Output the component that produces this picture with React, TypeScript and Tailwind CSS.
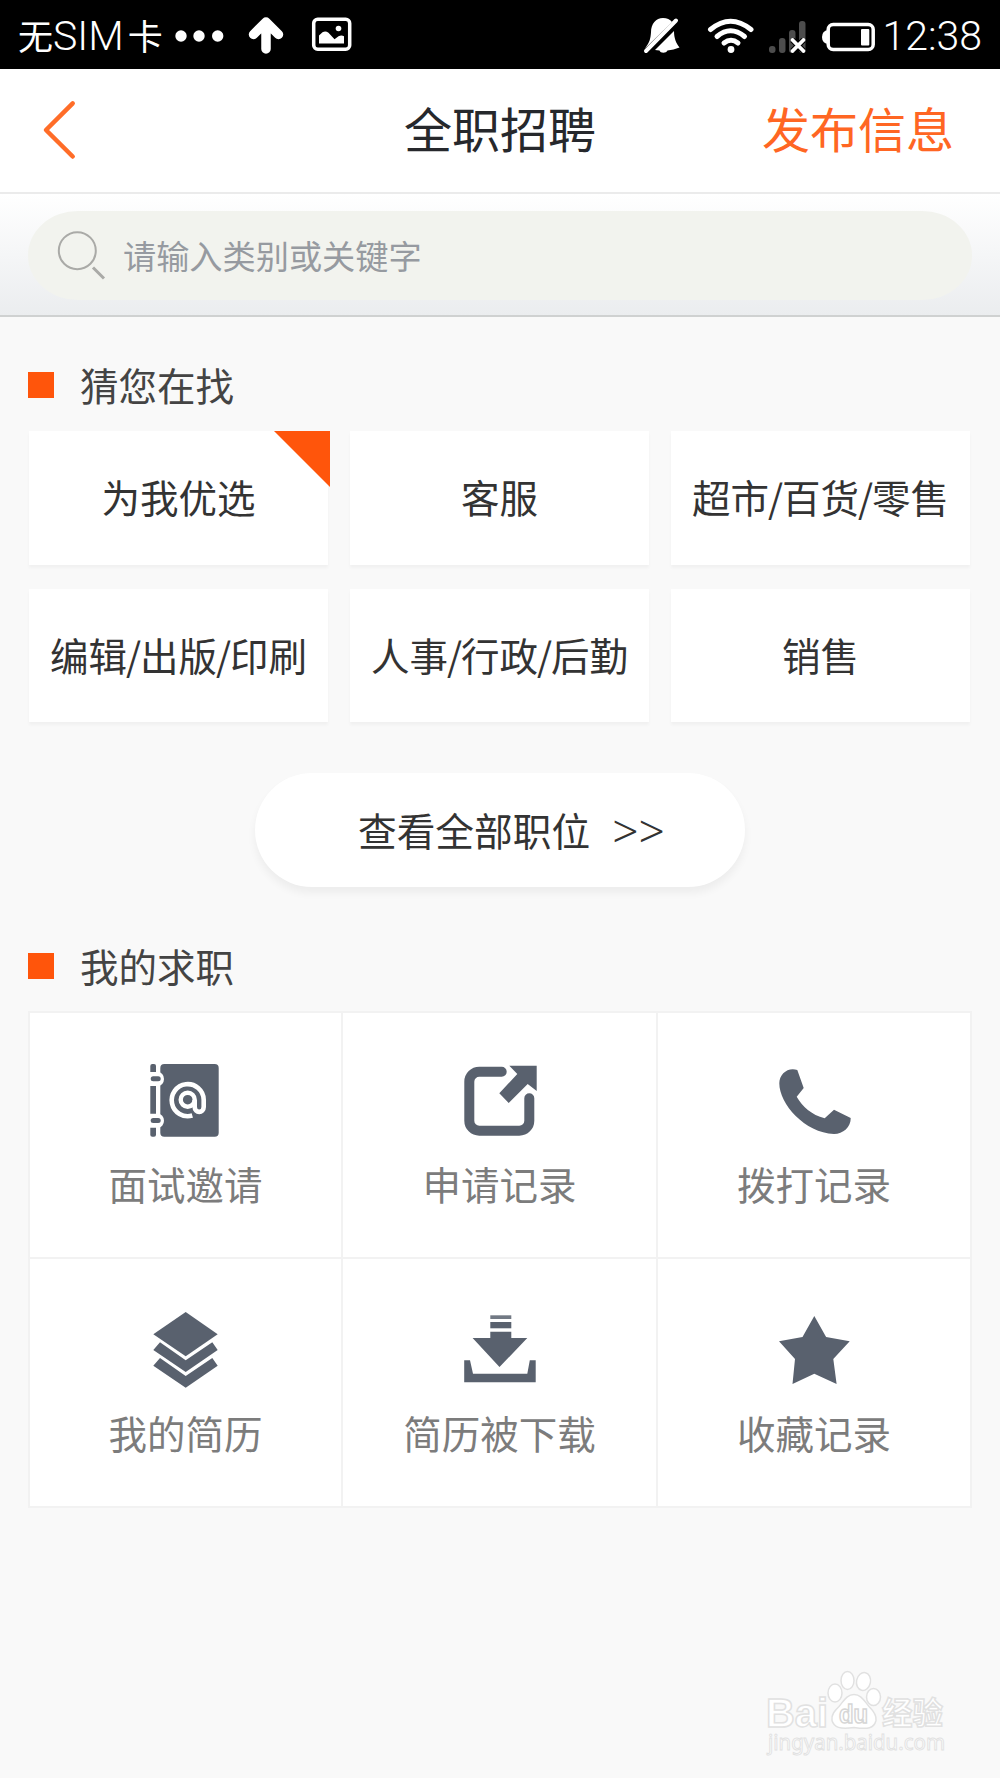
import { Fragment, type ReactNode } from 'react'

const categories = [
  { name: '为我优选', picked: true },
  { name: '客服' },
  { name: '超市/百货/零售' },
  { name: '编辑/出版/印刷' },
  { name: '人事/行政/后勤' },
  { name: '销售' },
]

const BookIcon = () => (
  <svg className="h-[76px] w-[76px]" viewBox="1 0 76 76" fill="none">
    <rect x="3.3" y="2" width="5.7" height="72.7" rx="2" fill="#59616e" />
    <rect x="13.3" y="2" width="58.4" height="72.7" rx="4" fill="#59616e" />
    <path d="M2 10h9a6 7 0 0 1 0 14H2zM2 51.7h9a6 7 0 0 1 0 14H2z" fill="#fff" />
    <rect x="3.7" y="14.3" width="10" height="5" rx="2.5" fill="#59616e" />
    <rect x="3.7" y="56" width="10" height="5" rx="2.5" fill="#59616e" />
    <circle cx="40.7" cy="37.7" r="7" stroke="#fff" strokeWidth="4.4" />
    <path
      d="M45.3 53.5A16 16 0 1 1 56.7 37.7V45c0 6.5-9 6.5-9 0v-7"
      stroke="#fff"
      strokeWidth="4.6"
    />
  </svg>
)

const ExportIcon = () => (
  <svg className="h-[76px] w-[76px]" viewBox="0 0 76 76" fill="none">
    <path
      d="M39.7 9.7H17.3a10 10 0 0 0-10 10v39a10 10 0 0 0 10 10h40a10 10 0 0 0 10-10V36.3"
      stroke="#59616e"
      strokeWidth="10"
      strokeLinecap="round"
    />
    <path d="M47.3 3.7h27.4V29l-9-7-19 19-9.4-9.7L55.3 12z" fill="#59616e" />
  </svg>
)

const PhoneIcon = () => (
  <svg className="h-[76px] w-[76px]" viewBox="-1 0 76 76" fill="#59616e">
    <path d="M20.3 8l6.4 18-7 8.7c5.5 9.8 15 18.2 28 21.6l9.3-8.6L73.7 56C74 65 66 72 57 72 28 71 2.3 42 2.3 21.3 2.3 12 11 4.8 20.3 8z" />
  </svg>
)

const LayersIcon = () => (
  <svg className="h-[76px] w-[76px]" viewBox="1 0 76 76" fill="#59616e">
    <path d="M38.7 0l32 22.3-32 22-32.4-22z" />
    <path d="M13 30.3l25.7 18 26.6-18 5.4 7.7-32 22-32.4-22z" />
    <path d="M13 46l25.7 18 26.6-18 5.4 7.7-32 22-32.4-22z" />
  </svg>
)

const DownloadIcon = () => (
  <svg className="h-[76px] w-[76px]" viewBox="0 0 76 76" fill="#59616e">
    <path d="M28.3 3.3h21V7h-21z" opacity=".85" />
    <path d="M28.3 10h21v6.3h-21z" />
    <path d="M28.3 19.7h21V26h16L37.5 55 10.6 26h17.7z" />
    <path d="M2.2 48.3H8l3 13.4h54.3l2.5-13.4h5.900v22H2.2z" />
  </svg>
)

const StarIcon = () => (
  <svg className="h-[76px] w-[76px]" viewBox="-1 0 76 76" fill="#59616e">
    <path d="M37.3 4l11.8 21 23.6 4.3L56.3 47l3.3 25-22.3-10.3L15.5 72 18 47 2 29.3 25.5 25z" />
  </svg>
)

const records = [
  { name: '面试邀请', icon: <BookIcon /> },
  { name: '申请记录', icon: <ExportIcon /> },
  { name: '拨打记录', icon: <PhoneIcon /> },
  { name: '我的简历', icon: <LayersIcon /> },
  { name: '简历被下载', icon: <DownloadIcon /> },
  { name: '收藏记录', icon: <StarIcon /> },
]

const StatusBar = () => (
  <div className="flex h-[69px] items-center justify-between bg-black pl-[18px] pr-[18px] text-white">
    <div className="flex items-center pt-[3px]">
      <span className="pb-[4px] text-[35px] leading-none">无</span>
      <span className="font-[Roboto] text-[41px] leading-none font-light">SIM</span>
      <span className="ml-[4px] pb-[4px] text-[35px] leading-none">卡</span>
      <svg className="ml-[11px] h-[40px] w-[180px]" viewBox="174 16 180 40" fill="none">
        <g fill="#fff">
          <circle cx="181" cy="36" r="5.7" />
          <circle cx="199" cy="36" r="5.7" />
          <circle cx="217.7" cy="36" r="5.7" />
        </g>
        <path d="M266 49V24M253.5 34.5L266 22l12.5 12.5" stroke="#fff" strokeWidth="9.5" strokeLinecap="round" strokeLinejoin="round" />
        <rect x="313.7" y="19.2" width="36" height="30" rx="4" stroke="#fff" strokeWidth="3.5" />
        <path d="M319 43.5v-8l3.5-3.2q3-2 6 .5l6 6.5 4-3q3-1.500 5.500 0v7.200z" fill="#fff" />
        <circle cx="338.5" cy="28.5" r="2.8" fill="#fff" />
      </svg>
    </div>
    <div className="flex items-center pt-[3px]">
      <svg className="mr-[2px] h-[40px] w-[240px]" viewBox="640 16 240 40" fill="none">
        <path d="M645 48.500c5-7 5.500-10 6-16 0-9 5-14.500 12-14.500 4 0 7 1.500 9 4z" fill="#fff" />
        <path d="M646 51l30-30.500" stroke="#fff" strokeWidth="4" strokeLinecap="round" />
        <path d="M674 31c0 7 2 12 5.500 16.500-4 1.500-8 2.500-12 3-1.500 3-7 3-8 0l-4.500-.5z" fill="#fff" />
        <g stroke="#fff" strokeWidth="5" strokeLinecap="round">
          <path d="M710.500 29.500q20-16.500 40.500 0" />
          <path d="M717 36.500q13.500-11.500 27.500 0" />
          <path d="M724 43q7-5.500 14 0" />
        </g>
        <circle cx="731" cy="49.5" r="3.4" fill="#fff" />
        <g fill="#4d4d4d">
          <rect x="769" y="46" width="6.5" height="7" rx="3" />
          <rect x="779" y="38" width="6.5" height="15" rx="3" />
          <rect x="789" y="30" width="6.5" height="23" rx="3" />
          <rect x="799" y="21" width="6.5" height="32" rx="3" />
        </g>
        <path d="M792.500 40l11 11M803.500 40l-11 11" stroke="#000" strokeWidth="6" />
        <path d="M792.500 40l11 11M803.500 40l-11 11" stroke="#fff" strokeWidth="3.8" strokeLinecap="round" />
        <rect x="828.2" y="24.5" width="45" height="25" rx="5" stroke="#fff" strokeWidth="3.5" />
        <path d="M828 30q-6 1-6 7t6 7z" fill="#fff" />
        <rect x="861" y="29" width="8.3" height="16.5" rx="1" fill="#fff" />
      </svg>
      <span className="font-[Roboto] text-[41px] leading-none font-light">12:38</span>
    </div>
  </div>
)

const SectionTitle = ({ children }: { children: ReactNode }) => (
  <div className="flex h-[44px] items-center gap-[26px] text-[38.5px] leading-[43px] text-[#444]">
    <span className="h-[26px] w-[26px] bg-[#ff550b]" />
    <h2 className="pb-px">{children}</h2>
  </div>
)

// slashes sit a little tighter than the full-width characters
const CategoryName = ({ name }: { name: string }) => (
  <span className="pb-[3px]">
    {name.split('/').map((part, i) => (
      <Fragment key={part}>
        {i > 0 && <span className="-mx-px">/</span>}
        {part}
      </Fragment>
    ))}
  </span>
)

const Watermark = () => (
  <svg className="h-[113px] w-[190px] overflow-visible" viewBox="762 1665 190 113" fill="#fff" stroke="#e1e1e1" strokeWidth="1.5">
    <text x="766" y="1726.5" fontSize="41" fontWeight="700" textLength="62" lengthAdjust="spacingAndGlyphs" fontFamily="Liberation Sans, sans-serif">
      Bai
    </text>
    <ellipse cx="835" cy="1693" rx="7" ry="9" />
    <ellipse cx="847.5" cy="1680.5" rx="6.5" ry="9" />
    <ellipse cx="863.5" cy="1681.5" rx="7" ry="9" transform="rotate(12 863.5 1681.5)" />
    <ellipse cx="873.5" cy="1697" rx="7" ry="8.5" />
    <path d="M854 1694.500c7 0 10 6 15 12 5 5 8 9 7 14-2 8-8 9-22 7-14 2-20 0-22-7-1-6 3-10 7-14 5-6 8-12 15-12z" />
    <text x="839" y="1722.5" fontSize="25" fontWeight="700" textLength="29" lengthAdjust="spacingAndGlyphs" fontFamily="Liberation Sans, sans-serif" stroke="#d6d6d6">
      du
    </text>
    <text x="882" y="1724" fontSize="31" fontWeight="700" textLength="61" lengthAdjust="spacingAndGlyphs" fontFamily="Noto Sans CJK SC, sans-serif">
      经验
    </text>
    <text x="768" y="1750" fontSize="22" strokeWidth="1" textLength="177" lengthAdjust="spacingAndGlyphs" fontFamily="Noto Sans, sans-serif">
      jingyan.baidu.com
    </text>
  </svg>
)

const App = () => {
  return (
    <div className="flex h-[1778px] w-[1000px] flex-col bg-[#f9f9f9] font-['Noto_Sans_CJK_SC',sans-serif]">
      <StatusBar />

      <header className="grid h-[125px] grid-cols-3 items-center border-b-2 border-[#ebebeb] bg-white text-[48px] leading-none">
        <svg className="mb-px ml-[42px] h-[60px] w-[36px]" viewBox="0 0 36 60" fill="none">
          <path d="M30.700 3.300L4 30l26.700 26.500" stroke="#ff6d28" strokeWidth="4.5" strokeLinecap="round" strokeLinejoin="round" />
        </svg>
        <h1 className="pb-[8px] text-center text-[#26282c]">全职招聘</h1>
        <button className="pr-[46px] pb-[8px] text-right text-[#ff6623]">发布信息</button>
      </header>

      <div className="h-[123px] border-b-2 border-[#cfd1d1] bg-linear-to-b from-white to-[#ebedef] px-[28px] pt-[17px]">
        <div className="flex h-[89px] items-center rounded-[50px/44px] bg-[#f2f3ee] pl-[28px]">
          <svg className="h-[54px] w-[54px]" viewBox="56 229 54 54" fill="none" stroke="#aaaaa7">
            <circle cx="77.3" cy="250.7" r="18.5" strokeWidth="2" />
            <path d="M93 267.500l11 11" strokeWidth="3" />
          </svg>
          <span className="ml-[13px] pb-[2px] text-[33.2px] leading-none text-[#969aa0]">请输入类别或关键字</span>
        </div>
      </div>

      <main className="px-7 pt-[46px]">
        <SectionTitle>猜您在找</SectionTitle>

        <div className="mt-[24px] grid grid-cols-3 gap-x-[22px] gap-y-[24px] pr-[2px] pl-px">
          {categories.map((item) => (
            <div
              key={item.name}
              className="relative flex h-[133.5px] items-center justify-center bg-white text-[38.5px] leading-none text-[#333] shadow-[0_3px_3px_rgba(0,0,0,0.035)]"
            >
              <CategoryName name={item.name} />
              {item.picked && (
                <svg className="absolute top-0 -right-[2px] h-[56px] w-[56px]" viewBox="0 0 56 56">
                  <path d="M0 0h56v56z" fill="#ff550b" />
                </svg>
              )}
            </div>
          ))}
        </div>

        <button className="mx-auto mt-[51px] flex h-[114px] w-[490px] items-center rounded-full bg-white pl-[103px] text-[38.7px] leading-none text-[#333] shadow-[0_6px_8px_rgba(0,0,0,0.05)]">
          <span className="pb-[2px]">查看全部职位</span>
          <span className="ml-[22px] font-['Noto_Sans'] text-[46px] leading-none font-light">&gt;&gt;</span>
        </button>

        <div className="mt-[57px]">
          <SectionTitle>我的求职</SectionTitle>
        </div>

        <div className="mt-[23px] grid grid-cols-[311px_313px_312px] grid-rows-[244px_247px] gap-[2px] bg-[#f2f2f2] p-[2px]">
          {records.map((item) => (
            <div
              key={item.name}
              className="flex flex-col items-center gap-[26px] bg-white pt-[49px] text-[38.5px] leading-none text-[#7c7c7c] nth-[n+4]:pt-[53px] nth-[n+4]:gap-[25px]"
            >
              {item.icon}
              <span>{item.name}</span>
            </div>
          ))}
        </div>
      </main>

      <footer className="mt-auto flex justify-end pr-[48px]">
        <Watermark />
      </footer>
    </div>
  )
}

export default App
